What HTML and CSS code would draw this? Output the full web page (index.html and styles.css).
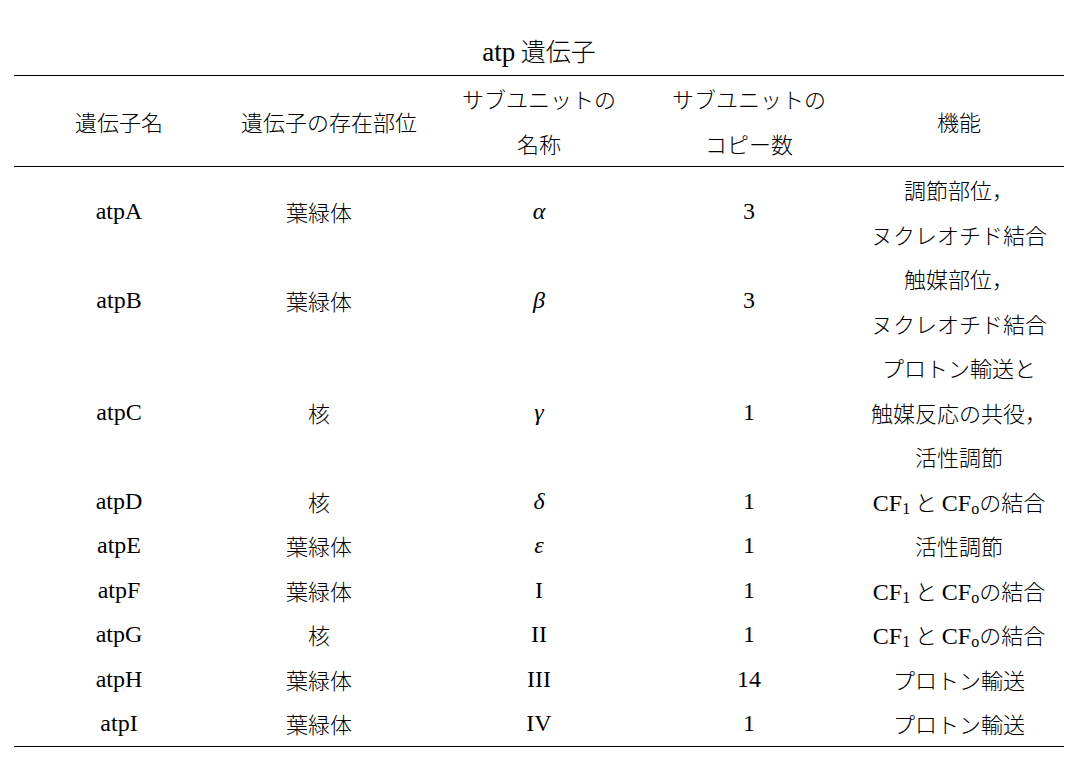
FILE: index.html
```html
<!DOCTYPE html>
<html lang="ja">
<head>
<meta charset="utf-8">
<link rel="stylesheet" href="styles.css">
</head>
<body>
<div class="page">
<table class="atp">
<caption><span class="lat">atp</span> 遺伝子</caption>
<colgroup><col class="c"><col class="c"><col class="c"><col class="c"><col class="c"></colgroup>
<thead>
<tr>
<th>遺伝子名</th>
<th>遺伝子の存在部位</th>
<th>サブユニットの<br>名称</th>
<th>サブユニットの<br>コピー数</th>
<th>機能</th>
</tr>
</thead>
<tbody>
<tr><td class="lat">atpA</td><td class="loc">葉緑体</td><td class="gr">α</td><td class="lat">3</td><td>調節部位，<br>ヌクレオチド結合</td></tr>
<tr><td class="lat">atpB</td><td class="loc">葉緑体</td><td class="gr">β</td><td class="lat">3</td><td>触媒部位，<br>ヌクレオチド結合</td></tr>
<tr><td class="lat">atpC</td><td class="loc">核</td><td class="gr">γ</td><td class="lat">1</td><td>プロトン輸送と<br>触媒反応の共役，<br>活性調節</td></tr>
<tr><td class="lat">atpD</td><td class="loc">核</td><td class="gr">δ</td><td class="lat">1</td><td><span class="lat">CF<sub>1</sub></span> と <span class="lat">CF<sub>o</sub></span>の結合</td></tr>
<tr><td class="lat">atpE</td><td class="loc">葉緑体</td><td class="gr">ε</td><td class="lat">1</td><td>活性調節</td></tr>
<tr><td class="lat">atpF</td><td class="loc">葉緑体</td><td class="lat">I</td><td class="lat">1</td><td><span class="lat">CF<sub>1</sub></span> と <span class="lat">CF<sub>o</sub></span>の結合</td></tr>
<tr><td class="lat">atpG</td><td class="loc">核</td><td class="lat">II</td><td class="lat">1</td><td><span class="lat">CF<sub>1</sub></span> と <span class="lat">CF<sub>o</sub></span>の結合</td></tr>
<tr><td class="lat">atpH</td><td class="loc">葉緑体</td><td class="lat">III</td><td class="lat">14</td><td>プロトン輸送</td></tr>
<tr><td class="lat">atpI</td><td class="loc">葉緑体</td><td class="lat">IV</td><td class="lat">1</td><td>プロトン輸送</td></tr>
</tbody>
</table>
</div>
</body>
</html>
```
FILE: styles.css
```css
html, body {
  margin: 0;
  padding: 0;
  background: #fff;
}
body {
  font-family: "Liberation Serif", "Noto Sans CJK JP", serif;
  font-size: 22px;
  color: #000;
}
.page {
  padding: 30px 0 0 14px;
}
.atp {
  width: 1050px;
  table-layout: fixed;
  border-collapse: collapse;
  font-family: "Noto Sans CJK JP", sans-serif;
  font-weight: 300;
}
.atp caption {
  font-size: 25px;
  line-height: 40px;
  padding-bottom: 5px;
  text-align: center;
}
.atp caption .lat {
  font-size: 27px;
}
.atp col.c {
  width: 210px;
}
.atp thead tr {
  border-top: 1px solid #000;
  border-bottom: 1px solid #000;
}
.atp tbody {
  border-bottom: 1px solid #000;
}
.atp th,
.atp td {
  padding: 0;
  text-align: center;
  vertical-align: middle;
  font-weight: 300;
  white-space: nowrap;
}
.atp th {
  height: 89px;
  line-height: 45px;
}
.atp td {
  line-height: 44.5px;
}
.atp td.loc {
  padding-right: 20px;
}
.lat {
  font-family: "Liberation Serif", serif;
  font-size: 24px;
  font-weight: 400;
}
span.lat {
  line-height: 1;
}
.gr {
  font-family: "Liberation Serif", serif;
  font-style: italic;
  font-size: 24px;
  font-weight: 400;
}
sub {
  font-size: 16px;
  line-height: 0;
  vertical-align: -3px;
}
```
